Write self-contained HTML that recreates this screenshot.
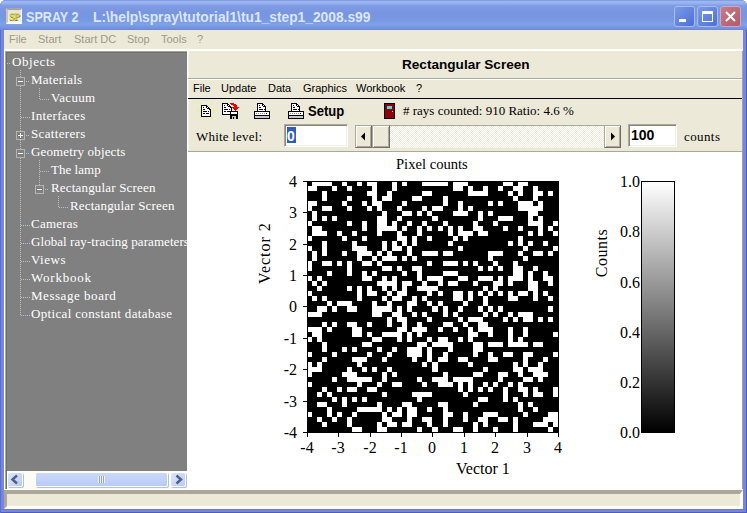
<!DOCTYPE html>
<html><head><meta charset="utf-8">
<style>
*{margin:0;padding:0;box-sizing:border-box}
html,body{width:747px;height:513px;overflow:hidden;background:#fff}
body{position:relative;font-family:"Liberation Sans",sans-serif;font-size:11px;color:#000}
.a{position:absolute}
.t{position:absolute;white-space:pre;line-height:1}
#win{left:0;top:0;width:747px;height:513px;background:#7686dc;border-radius:6px 6px 0 0;box-shadow:inset 1px 0 0 #5c6cd0,inset -1px -1px 0 #4e5cbc}
#title{left:0;top:0;width:747px;height:30px;border-radius:6px 6px 0 0;
 background:linear-gradient(#6b86d6 0px,#9cb6f2 1px,#9ab4f0 3px,#7e9ae2 6px,#7795e0 14px,#7898e2 20px,#7ea2e8 24px,#7898e2 27px,#6c86d6 30px)}
#client{left:4px;top:30px;width:739px;height:479px;background:#ece9d8}
.mt{color:#9c998a;font-size:11px}
#tree{left:5px;top:51px;width:182px;height:420px;background:#808080;border-left:1px solid #aca899;border-top:1px solid #aca899;box-shadow:inset 1px 1px 0 #716f64}
.tr{position:absolute;white-space:pre;font-family:"Liberation Serif",serif;font-size:13px;color:#fff;line-height:1;letter-spacing:0px}
.dv{position:absolute;width:1px;background:repeating-linear-gradient(#c0c0c0 0 1px,transparent 1px 2px)}
.dh{position:absolute;height:1px;background:repeating-linear-gradient(90deg,#c0c0c0 0 1px,transparent 1px 2px)}
.box{position:absolute;width:9px;height:9px;border:1px solid #b4b4b4;background:#808080}
.box:before{content:"";position:absolute;left:1px;top:3px;width:5px;height:1px;background:#fff}
.box.p:after{content:"";position:absolute;left:3px;top:1px;width:1px;height:5px;background:#fff}
.se{position:absolute;white-space:pre;font-family:"Liberation Serif",serif;line-height:1}
.mn{position:absolute;white-space:pre;font-size:11px;line-height:1;color:#000}
.btn{position:absolute;background:#ece9d8;border:1px solid;border-color:#aca899 #716f64 #716f64 #aca899;box-shadow:inset 1px 1px 0 #fff,inset -1px -1px 0 #aca899}
.tk{position:absolute;background:#000}
</style></head><body>
<div id="win" class="a"></div>
<div id="title" class="a"></div>
<!-- title corners -->


<!-- app icon -->
<div class="a" style="left:6px;top:8px;width:16px;height:16px;background:linear-gradient(#e8e0e0,#f4eeee);border-style:solid;border-width:2px 1px 2px 2px;border-color:#a8a4a0 #f8f8f8 #fff #c8c4c0"></div>
<div class="t" style="left:9px;top:12px;font-family:'Liberation Serif';font-weight:700;font-size:10px;color:#d8d830;letter-spacing:-0.5px;text-shadow:0.5px 0.5px 0 #707030">SP</div>
<div class="t" style="left:26px;top:10px;font-size:14px;font-weight:700;color:#dce6fa;transform:scaleX(0.9);transform-origin:0 0">SPRAY 2</div>
<div class="t" style="left:93px;top:10px;font-size:14px;font-weight:700;color:#dce6fa;transform:scaleX(0.985);transform-origin:0 0">L:\help\spray\tutorial1\tu1_step1_2008.s99</div>
<!-- title buttons -->
<div class="a" style="left:674px;top:6px;width:21px;height:21px;border:1px solid #a8bcf0;border-radius:3px;background:linear-gradient(135deg,#7a9ae8,#4d6fd8)"></div>
<div class="a" style="left:679px;top:19px;width:7px;height:3px;background:#fff"></div>
<div class="a" style="left:697px;top:6px;width:21px;height:21px;border:1px solid #a8bcf0;border-radius:3px;background:linear-gradient(135deg,#7a9ae8,#4d6fd8)"></div>
<div class="a" style="left:702px;top:11px;width:11px;height:11px;border:1px solid #fff;border-top-width:3px"></div>
<div class="a" style="left:720px;top:6px;width:21px;height:21px;border:1px solid #c8a8c8;border-radius:3px;background:linear-gradient(135deg,#c87c88,#b85868)"></div>
<svg class="a" style="left:720px;top:6px" width="21" height="21"><path d="M6 6L15 15M15 6L6 15" stroke="#fff" stroke-width="2"/></svg>

<div id="client" class="a"></div>
<!-- main menu -->
<div class="t mt" style="left:9px;top:34px">File</div>
<div class="t mt" style="left:38px;top:34px">Start</div>
<div class="t mt" style="left:74px;top:34px">Start DC</div>
<div class="t mt" style="left:127px;top:34px">Stop</div>
<div class="t mt" style="left:161px;top:34px">Tools</div>
<div class="t mt" style="left:197px;top:34px">?</div>
<div class="a" style="left:4px;top:49px;width:739px;height:2px;background:#fff"></div>

<!-- tree -->
<div id="tree" class="a">
</div>
<div class="a" style="left:0;top:0">
<div class="tr" style="left:12px;top:55px;letter-spacing:0.57px">Objects</div>
<div class="tr" style="left:31px;top:73px;letter-spacing:0.26px">Materials</div>
<div class="tr" style="left:51px;top:91px;letter-spacing:0.32px">Vacuum</div>
<div class="tr" style="left:31px;top:109px;letter-spacing:0.33px">Interfaces</div>
<div class="tr" style="left:31px;top:127px;letter-spacing:0.33px">Scatterers</div>
<div class="tr" style="left:31px;top:145px;letter-spacing:0.15px">Geometry objects</div>
<div class="tr" style="left:51px;top:163px;letter-spacing:0.03px">The lamp</div>
<div class="tr" style="left:51px;top:181px;letter-spacing:0.18px">Rectangular Screen</div>
<div class="tr" style="left:70px;top:199px;letter-spacing:0.18px">Rectangular Screen</div>
<div class="tr" style="left:31px;top:217px;letter-spacing:0.23px">Cameras</div>
<div class="tr" style="left:31px;top:235px;letter-spacing:0.07px">Global ray-tracing parameters</div>
<div class="tr" style="left:31px;top:253px;letter-spacing:0.5px">Views</div>
<div class="tr" style="left:31px;top:271px;letter-spacing:0.79px">Workbook</div>
<div class="tr" style="left:31px;top:289px;letter-spacing:0.54px">Message board</div>
<div class="tr" style="left:31px;top:307px;letter-spacing:0.34px">Optical constant database</div>
<div class="dh" style="left:7px;top:63px;width:4px"></div>
<div class="dv" style="left:20px;top:70px;height:246px"></div>
<div class="dh" style="left:26px;top:81px;width:4px"></div>
<div class="box" style="left:16px;top:77px"></div>
<div class="dh" style="left:40px;top:99px;width:9px"></div>
<div class="dh" style="left:21px;top:117px;width:9px"></div>
<div class="dh" style="left:26px;top:135px;width:4px"></div>
<div class="box p" style="left:16px;top:131px"></div>
<div class="dh" style="left:26px;top:153px;width:4px"></div>
<div class="box" style="left:16px;top:149px"></div>
<div class="dh" style="left:40px;top:171px;width:9px"></div>
<div class="dh" style="left:45px;top:189px;width:4px"></div>
<div class="box" style="left:35px;top:185px"></div>
<div class="dh" style="left:59px;top:207px;width:9px"></div>
<div class="dh" style="left:21px;top:225px;width:9px"></div>
<div class="dh" style="left:21px;top:243px;width:9px"></div>
<div class="dh" style="left:21px;top:261px;width:9px"></div>
<div class="dh" style="left:21px;top:279px;width:9px"></div>
<div class="dh" style="left:21px;top:297px;width:9px"></div>
<div class="dh" style="left:21px;top:315px;width:9px"></div>
<div class="dv" style="left:39px;top:88px;height:12px"></div>
<div class="dv" style="left:39px;top:160px;height:25px"></div>
<div class="dv" style="left:58px;top:196px;height:12px"></div>
</div>
<!-- tree scrollbar -->
<div class="a" style="left:5px;top:471px;width:182px;height:18px;background:#fcfcf6;border-left:1px solid #aca899;box-shadow:inset 1px 0 0 #716f64"></div>
<div class="a" style="left:7px;top:472px;width:16px;height:15px;border:1px solid #fff;border-radius:2px;background:linear-gradient(135deg,#dce6fd,#b9cbf5);box-shadow:1px 1px 0 #b4c0dc"></div>
<svg class="a" style="left:7px;top:472px" width="16" height="15"><path d="M10 3.5L5.5 7.5L10 11.5" fill="none" stroke="#4d6185" stroke-width="2.4"/></svg>
<div class="a" style="left:35px;top:472px;width:133px;height:15px;border:1px solid #fff;border-radius:2px;background:linear-gradient(#cad9fb,#b8cbf6);box-shadow:1px 1px 0 #b4c0dc"></div>
<div class="a" style="left:98px;top:476px;width:7px;height:7px;background:repeating-linear-gradient(90deg,#eef2fe 0 1px,#8ea4d8 1px 2px)"></div>
<div class="a" style="left:170px;top:472px;width:16px;height:15px;border:1px solid #fff;border-radius:2px;background:linear-gradient(135deg,#dce6fd,#b9cbf5);box-shadow:1px 1px 0 #b4c0dc"></div>
<svg class="a" style="left:170px;top:472px" width="16" height="15"><path d="M6.5 3.5L11 7.5L6.5 11.5" fill="none" stroke="#4d6185" stroke-width="2.4"/></svg>

<!-- right panel -->
<div class="a" style="left:187px;top:51px;width:1px;height:438px;background:#fff"></div>
<div class="a" style="left:188px;top:51px;width:1px;height:100px;background:#f6f4ec"></div>
<div class="a" style="left:742px;top:49px;width:1px;height:2px;background:#fff"></div><div class="a" style="left:742px;top:51px;width:1px;height:438px;background:#a0a2b8"></div>
<div class="t" style="left:402px;top:58px;font-size:13px;font-weight:700;transform:scaleX(1.045);transform-origin:0 0">Rectangular Screen</div>
<div class="a" style="left:188px;top:78px;width:554px;height:1px;background:#aca899"></div>
<div class="a" style="left:188px;top:79px;width:554px;height:1px;background:#fff"></div>
<div class="mn" style="left:193px;top:83px">File</div>
<div class="mn" style="left:221px;top:83px">Update</div>
<div class="mn" style="left:268px;top:83px">Data</div>
<div class="mn" style="left:303px;top:83px">Graphics</div>
<div class="mn" style="left:356px;top:83px">Workbook</div>
<div class="mn" style="left:416px;top:83px">?</div>
<div class="a" style="left:188px;top:98px;width:554px;height:1px;background:#000"></div>

<!-- toolbar icons -->
<svg class="a" style="left:0;top:0" width="747" height="130" shape-rendering="crispEdges"><rect x="199" y="102" width="2" height="1" fill="#eef0a0"/><rect x="211" y="102" width="2" height="1" fill="#eef0a0"/><rect x="199" y="103" width="1" height="1" fill="#eef0a0"/><rect x="200" y="103" width="1" height="1" fill="#e8f060"/><rect x="201" y="103" width="1" height="1" fill="#eef0a0"/><rect x="210" y="103" width="1" height="1" fill="#eef0a0"/><rect x="211" y="103" width="1" height="1" fill="#e8f060"/><rect x="212" y="103" width="1" height="1" fill="#eef0a0"/><rect x="200" y="104" width="2" height="1" fill="#eef0a0"/><rect x="210" y="104" width="2" height="1" fill="#eef0a0"/><rect x="197" y="109" width="2" height="1" fill="#eef0a0"/><rect x="213" y="109" width="2" height="1" fill="#eef0a0"/><rect x="197" y="110" width="1" height="1" fill="#e8f060"/><rect x="198" y="110" width="2" height="1" fill="#eef0a0"/><rect x="212" y="110" width="2" height="1" fill="#eef0a0"/><rect x="214" y="110" width="1" height="1" fill="#e8f060"/><rect x="197" y="111" width="2" height="1" fill="#eef0a0"/><rect x="213" y="111" width="2" height="1" fill="#eef0a0"/><rect x="199" y="116" width="2" height="1" fill="#eef0a0"/><rect x="211" y="116" width="2" height="1" fill="#eef0a0"/><rect x="199" y="117" width="1" height="1" fill="#eef0a0"/><rect x="200" y="117" width="1" height="1" fill="#e8f060"/><rect x="201" y="117" width="1" height="1" fill="#eef0a0"/><rect x="210" y="117" width="1" height="1" fill="#eef0a0"/><rect x="211" y="117" width="1" height="1" fill="#e8f060"/><rect x="212" y="117" width="1" height="1" fill="#eef0a0"/><rect x="200" y="118" width="2" height="1" fill="#eef0a0"/><rect x="210" y="118" width="2" height="1" fill="#eef0a0"/><rect x="201" y="105" width="6" height="1" fill="#000"/><rect x="201" y="106" width="1" height="1" fill="#000"/><rect x="202" y="106" width="4" height="1" fill="#fff"/><rect x="206" y="106" width="2" height="1" fill="#000"/><rect x="201" y="107" width="1" height="1" fill="#000"/><rect x="202" y="107" width="1" height="1" fill="#fff"/><rect x="203" y="107" width="1" height="1" fill="#000"/><rect x="204" y="107" width="2" height="1" fill="#fff"/><rect x="206" y="107" width="1" height="1" fill="#000"/><rect x="207" y="107" width="1" height="1" fill="#fff"/><rect x="208" y="107" width="1" height="1" fill="#000"/><rect x="201" y="108" width="1" height="1" fill="#000"/><rect x="202" y="108" width="5" height="1" fill="#fff"/><rect x="207" y="108" width="3" height="1" fill="#000"/><rect x="201" y="109" width="1" height="1" fill="#000"/><rect x="202" y="109" width="1" height="1" fill="#fff"/><rect x="203" y="109" width="2" height="1" fill="#000"/><rect x="205" y="109" width="4" height="1" fill="#fff"/><rect x="209" y="109" width="2" height="1" fill="#000"/><rect x="201" y="110" width="1" height="1" fill="#000"/><rect x="202" y="110" width="8" height="1" fill="#fff"/><rect x="210" y="110" width="1" height="1" fill="#000"/><rect x="201" y="111" width="1" height="1" fill="#000"/><rect x="202" y="111" width="1" height="1" fill="#fff"/><rect x="203" y="111" width="4" height="1" fill="#000"/><rect x="207" y="111" width="1" height="1" fill="#fff"/><rect x="208" y="111" width="1" height="1" fill="#000"/><rect x="209" y="111" width="1" height="1" fill="#fff"/><rect x="210" y="111" width="1" height="1" fill="#000"/><rect x="201" y="112" width="1" height="1" fill="#000"/><rect x="202" y="112" width="8" height="1" fill="#fff"/><rect x="210" y="112" width="1" height="1" fill="#000"/><rect x="201" y="113" width="1" height="1" fill="#000"/><rect x="202" y="113" width="1" height="1" fill="#fff"/><rect x="203" y="113" width="2" height="1" fill="#000"/><rect x="205" y="113" width="1" height="1" fill="#fff"/><rect x="206" y="113" width="3" height="1" fill="#000"/><rect x="209" y="113" width="1" height="1" fill="#fff"/><rect x="210" y="113" width="1" height="1" fill="#000"/><rect x="201" y="114" width="1" height="1" fill="#000"/><rect x="202" y="114" width="8" height="1" fill="#fff"/><rect x="210" y="114" width="1" height="1" fill="#000"/><rect x="201" y="115" width="1" height="1" fill="#000"/><rect x="202" y="115" width="8" height="1" fill="#fff"/><rect x="210" y="115" width="1" height="1" fill="#000"/><rect x="201" y="116" width="10" height="1" fill="#000"/><rect x="222" y="103" width="6" height="1" fill="#000"/><rect x="222" y="104" width="1" height="1" fill="#000"/><rect x="223" y="104" width="4" height="1" fill="#fff"/><rect x="227" y="104" width="2" height="1" fill="#000"/><rect x="222" y="105" width="1" height="1" fill="#000"/><rect x="223" y="105" width="1" height="1" fill="#fff"/><rect x="224" y="105" width="1" height="1" fill="#000"/><rect x="225" y="105" width="2" height="1" fill="#fff"/><rect x="227" y="105" width="1" height="1" fill="#000"/><rect x="228" y="105" width="1" height="1" fill="#fff"/><rect x="229" y="105" width="1" height="1" fill="#000"/><rect x="222" y="106" width="1" height="1" fill="#000"/><rect x="223" y="106" width="5" height="1" fill="#fff"/><rect x="228" y="106" width="3" height="1" fill="#000"/><rect x="222" y="107" width="1" height="1" fill="#000"/><rect x="223" y="107" width="1" height="1" fill="#fff"/><rect x="224" y="107" width="2" height="1" fill="#000"/><rect x="226" y="107" width="4" height="1" fill="#fff"/><rect x="230" y="107" width="2" height="1" fill="#000"/><rect x="222" y="108" width="1" height="1" fill="#000"/><rect x="223" y="108" width="8" height="1" fill="#fff"/><rect x="231" y="108" width="1" height="1" fill="#000"/><rect x="222" y="109" width="1" height="1" fill="#000"/><rect x="223" y="109" width="1" height="1" fill="#fff"/><rect x="224" y="109" width="4" height="1" fill="#000"/><rect x="228" y="109" width="1" height="1" fill="#fff"/><rect x="229" y="109" width="1" height="1" fill="#000"/><rect x="230" y="109" width="1" height="1" fill="#fff"/><rect x="231" y="109" width="1" height="1" fill="#000"/><rect x="222" y="110" width="1" height="1" fill="#000"/><rect x="223" y="110" width="8" height="1" fill="#fff"/><rect x="231" y="110" width="1" height="1" fill="#000"/><rect x="222" y="111" width="1" height="1" fill="#000"/><rect x="223" y="111" width="1" height="1" fill="#fff"/><rect x="224" y="111" width="2" height="1" fill="#000"/><rect x="226" y="111" width="1" height="1" fill="#fff"/><rect x="227" y="111" width="3" height="1" fill="#000"/><rect x="230" y="111" width="1" height="1" fill="#fff"/><rect x="231" y="111" width="1" height="1" fill="#000"/><rect x="222" y="112" width="1" height="1" fill="#000"/><rect x="223" y="112" width="8" height="1" fill="#fff"/><rect x="231" y="112" width="1" height="1" fill="#000"/><rect x="222" y="113" width="1" height="1" fill="#000"/><rect x="223" y="113" width="8" height="1" fill="#fff"/><rect x="231" y="113" width="1" height="1" fill="#000"/><rect x="222" y="114" width="10" height="1" fill="#000"/><rect x="230" y="103" width="4" height="1" fill="#e80000"/><rect x="231" y="104" width="5" height="1" fill="#e80000"/><rect x="233" y="105" width="4" height="1" fill="#e80000"/><rect x="234" y="106" width="3" height="1" fill="#e80000"/><rect x="232" y="107" width="7" height="1" fill="#e80000"/><rect x="233" y="108" width="5" height="1" fill="#e80000"/><rect x="234" y="109" width="3" height="1" fill="#e80000"/><rect x="235" y="110" width="1" height="1" fill="#e80000"/><rect x="230" y="111" width="8" height="1" fill="#000"/><rect x="230" y="112" width="1" height="1" fill="#000"/><rect x="231" y="112" width="6" height="1" fill="#fff"/><rect x="237" y="112" width="1" height="1" fill="#000"/><rect x="230" y="113" width="1" height="1" fill="#000"/><rect x="231" y="113" width="6" height="1" fill="#fff"/><rect x="237" y="113" width="1" height="1" fill="#000"/><rect x="230" y="114" width="8" height="1" fill="#000"/><rect x="230" y="115" width="8" height="1" fill="#000"/><rect x="230" y="116" width="2" height="1" fill="#000"/><rect x="232" y="116" width="4" height="1" fill="#c8c8c8"/><rect x="236" y="116" width="2" height="1" fill="#000"/><rect x="230" y="117" width="2" height="1" fill="#000"/><rect x="232" y="117" width="1" height="1" fill="#c8c8c8"/><rect x="233" y="117" width="1" height="1" fill="#000"/><rect x="234" y="117" width="2" height="1" fill="#c8c8c8"/><rect x="236" y="117" width="2" height="1" fill="#000"/><rect x="230" y="118" width="2" height="1" fill="#000"/><rect x="232" y="118" width="1" height="1" fill="#c8c8c8"/><rect x="233" y="118" width="1" height="1" fill="#000"/><rect x="234" y="118" width="2" height="1" fill="#c8c8c8"/><rect x="236" y="118" width="2" height="1" fill="#000"/><rect x="257" y="103" width="6" height="1" fill="#000"/><rect x="257" y="104" width="1" height="1" fill="#000"/><rect x="258" y="104" width="4" height="1" fill="#fff"/><rect x="262" y="104" width="2" height="1" fill="#000"/><rect x="257" y="105" width="1" height="1" fill="#000"/><rect x="258" y="105" width="1" height="1" fill="#fff"/><rect x="259" y="105" width="1" height="1" fill="#000"/><rect x="260" y="105" width="2" height="1" fill="#fff"/><rect x="262" y="105" width="1" height="1" fill="#000"/><rect x="263" y="105" width="1" height="1" fill="#fff"/><rect x="264" y="105" width="1" height="1" fill="#000"/><rect x="257" y="106" width="1" height="1" fill="#000"/><rect x="258" y="106" width="5" height="1" fill="#fff"/><rect x="263" y="106" width="3" height="1" fill="#000"/><rect x="257" y="107" width="1" height="1" fill="#000"/><rect x="258" y="107" width="1" height="1" fill="#fff"/><rect x="259" y="107" width="2" height="1" fill="#000"/><rect x="261" y="107" width="4" height="1" fill="#fff"/><rect x="265" y="107" width="1" height="1" fill="#000"/><rect x="257" y="108" width="1" height="1" fill="#000"/><rect x="258" y="108" width="7" height="1" fill="#fff"/><rect x="265" y="108" width="1" height="1" fill="#000"/><rect x="257" y="109" width="1" height="1" fill="#000"/><rect x="258" y="109" width="1" height="1" fill="#fff"/><rect x="259" y="109" width="4" height="1" fill="#000"/><rect x="263" y="109" width="1" height="1" fill="#fff"/><rect x="264" y="109" width="2" height="1" fill="#000"/><rect x="257" y="110" width="1" height="1" fill="#000"/><rect x="258" y="110" width="7" height="1" fill="#fff"/><rect x="265" y="110" width="1" height="1" fill="#000"/><rect x="254" y="111" width="16" height="1" fill="#000"/><rect x="254" y="112" width="1" height="1" fill="#000"/><rect x="255" y="112" width="14" height="1" fill="#fff"/><rect x="269" y="112" width="1" height="1" fill="#000"/><rect x="254" y="113" width="1" height="1" fill="#000"/><rect x="255" y="113" width="1" height="1" fill="#fff"/><rect x="256" y="113" width="1" height="1" fill="#909090"/><rect x="257" y="113" width="1" height="1" fill="#fff"/><rect x="258" y="113" width="1" height="1" fill="#909090"/><rect x="259" y="113" width="1" height="1" fill="#fff"/><rect x="260" y="113" width="1" height="1" fill="#909090"/><rect x="261" y="113" width="1" height="1" fill="#fff"/><rect x="262" y="113" width="1" height="1" fill="#909090"/><rect x="263" y="113" width="1" height="1" fill="#fff"/><rect x="264" y="113" width="1" height="1" fill="#909090"/><rect x="265" y="113" width="1" height="1" fill="#fff"/><rect x="266" y="113" width="1" height="1" fill="#000"/><rect x="267" y="113" width="2" height="1" fill="#fff"/><rect x="269" y="113" width="1" height="1" fill="#000"/><rect x="254" y="114" width="1" height="1" fill="#000"/><rect x="255" y="114" width="14" height="1" fill="#fff"/><rect x="269" y="114" width="1" height="1" fill="#000"/><rect x="254" y="115" width="16" height="1" fill="#000"/><rect x="254" y="116" width="1" height="1" fill="#000"/><rect x="255" y="116" width="14" height="1" fill="#c8c8c8"/><rect x="269" y="116" width="1" height="1" fill="#000"/><rect x="254" y="117" width="1" height="1" fill="#000"/><rect x="255" y="117" width="14" height="1" fill="#c8c8c8"/><rect x="269" y="117" width="1" height="1" fill="#000"/><rect x="254" y="118" width="16" height="1" fill="#000"/><rect x="291" y="103" width="6" height="1" fill="#000"/><rect x="291" y="104" width="1" height="1" fill="#000"/><rect x="292" y="104" width="4" height="1" fill="#fff"/><rect x="296" y="104" width="2" height="1" fill="#000"/><rect x="291" y="105" width="1" height="1" fill="#000"/><rect x="292" y="105" width="1" height="1" fill="#fff"/><rect x="293" y="105" width="1" height="1" fill="#000"/><rect x="294" y="105" width="2" height="1" fill="#fff"/><rect x="296" y="105" width="1" height="1" fill="#000"/><rect x="297" y="105" width="1" height="1" fill="#fff"/><rect x="298" y="105" width="1" height="1" fill="#000"/><rect x="291" y="106" width="1" height="1" fill="#000"/><rect x="292" y="106" width="5" height="1" fill="#fff"/><rect x="297" y="106" width="3" height="1" fill="#000"/><rect x="291" y="107" width="1" height="1" fill="#000"/><rect x="292" y="107" width="1" height="1" fill="#fff"/><rect x="293" y="107" width="2" height="1" fill="#000"/><rect x="295" y="107" width="4" height="1" fill="#fff"/><rect x="299" y="107" width="1" height="1" fill="#000"/><rect x="291" y="108" width="1" height="1" fill="#000"/><rect x="292" y="108" width="7" height="1" fill="#fff"/><rect x="299" y="108" width="1" height="1" fill="#000"/><rect x="291" y="109" width="1" height="1" fill="#000"/><rect x="292" y="109" width="1" height="1" fill="#fff"/><rect x="293" y="109" width="4" height="1" fill="#000"/><rect x="297" y="109" width="1" height="1" fill="#fff"/><rect x="298" y="109" width="2" height="1" fill="#000"/><rect x="291" y="110" width="1" height="1" fill="#000"/><rect x="292" y="110" width="7" height="1" fill="#fff"/><rect x="299" y="110" width="1" height="1" fill="#000"/><rect x="288" y="111" width="16" height="1" fill="#000"/><rect x="288" y="112" width="1" height="1" fill="#000"/><rect x="289" y="112" width="14" height="1" fill="#fff"/><rect x="303" y="112" width="1" height="1" fill="#000"/><rect x="288" y="113" width="1" height="1" fill="#000"/><rect x="289" y="113" width="1" height="1" fill="#fff"/><rect x="290" y="113" width="1" height="1" fill="#909090"/><rect x="291" y="113" width="1" height="1" fill="#fff"/><rect x="292" y="113" width="1" height="1" fill="#909090"/><rect x="293" y="113" width="1" height="1" fill="#fff"/><rect x="294" y="113" width="1" height="1" fill="#909090"/><rect x="295" y="113" width="1" height="1" fill="#fff"/><rect x="296" y="113" width="1" height="1" fill="#909090"/><rect x="297" y="113" width="1" height="1" fill="#fff"/><rect x="298" y="113" width="1" height="1" fill="#909090"/><rect x="299" y="113" width="1" height="1" fill="#fff"/><rect x="300" y="113" width="1" height="1" fill="#000"/><rect x="301" y="113" width="2" height="1" fill="#fff"/><rect x="303" y="113" width="1" height="1" fill="#000"/><rect x="288" y="114" width="1" height="1" fill="#000"/><rect x="289" y="114" width="14" height="1" fill="#fff"/><rect x="303" y="114" width="1" height="1" fill="#000"/><rect x="288" y="115" width="16" height="1" fill="#000"/><rect x="288" y="116" width="1" height="1" fill="#000"/><rect x="289" y="116" width="14" height="1" fill="#c8c8c8"/><rect x="303" y="116" width="1" height="1" fill="#000"/><rect x="288" y="117" width="1" height="1" fill="#000"/><rect x="289" y="117" width="14" height="1" fill="#c8c8c8"/><rect x="303" y="117" width="1" height="1" fill="#000"/><rect x="288" y="118" width="16" height="1" fill="#000"/></svg>
<div class="t" style="left:308px;top:104px;font-size:14px;font-weight:700;transform:scaleX(0.93);transform-origin:0 0">Setup</div>
<div class="a" style="left:384px;top:103px;width:11px;height:16px;background:#900000;border:1px solid #000"></div>
<div class="a" style="left:387px;top:106px;width:5px;height:3px;background:#40e0f0"></div>
<div class="a" style="left:392px;top:111px;width:1px;height:1px;background:#ffc080"></div>
<div class="se" style="left:403px;top:104px;font-size:13px">&#35; rays counted: 910 Ratio: 4.6 %</div>

<!-- white level row -->
<div class="se" style="left:196px;top:130px;font-size:13px;letter-spacing:0.2px">White level:</div>
<div class="a" style="left:284px;top:124px;width:64px;height:23px;background:#fff;border:1px solid;border-color:#aca899 #fff #fff #aca899;box-shadow:inset 1px 1px 0 #8a887c,inset -1px -1px 0 #f1efe2"></div>
<div class="a" style="left:287px;top:127px;width:9px;height:16px;background:#2f5eb4"></div>
<div class="t" style="left:287px;top:129px;font-size:14px;font-weight:700;color:#fff">0</div>
<div class="a" style="left:355px;top:125px;width:266px;height:23px;background:repeating-conic-gradient(#fff 0 25%,#ece9d8 0 50%) 0 0/2px 2px;border-top:1px solid #aca899"></div>
<div class="btn" style="left:355px;top:125px;width:17px;height:23px"></div>
<svg class="a" style="left:355px;top:125px" width="17" height="22"><path d="M6 11.5L10 7.5V15.5z" fill="#000"/></svg>
<div class="btn" style="left:372px;top:125px;width:18px;height:23px"></div>
<div class="btn" style="left:604px;top:125px;width:17px;height:23px"></div>
<svg class="a" style="left:604px;top:125px" width="17" height="22"><path d="M11 11.5L7 7.5V15.5z" fill="#000"/></svg>
<div class="a" style="left:628px;top:124px;width:49px;height:23px;background:#fff;border:1px solid;border-color:#aca899 #fff #fff #aca899;box-shadow:inset 1px 1px 0 #8a887c,inset -1px -1px 0 #f1efe2"></div>
<div class="t" style="left:631px;top:128px;font-size:14px;font-weight:700">100</div>
<div class="se" style="left:684px;top:130px;font-size:13px;letter-spacing:0.4px">counts</div>
<div class="a" style="left:188px;top:151px;width:554px;height:1px;background:#aca899"></div>

<!-- plot area -->
<div class="a" style="left:187px;top:152px;width:555px;height:337px;background:#fff"></div>
<div class="se" style="left:396px;top:157px;font-size:14.6px">Pixel counts</div>
<div class="a" style="left:307px;top:181px;width:252px;height:252px;background:#000"></div>
<svg class="a" style="left:307px;top:181px" width="251" height="251" shape-rendering="crispEdges"><path fill="#fff" d="M5 0H25V5H5zM35 0H40V5H35zM50 0H55V5H50zM60 0H70V5H60zM85 0H90V5H85zM95 0H100V5H95zM115 0H141V5H115zM146 0H161V5H146zM196 0H206V5H196zM211 0H221V5H211zM0 5H10V10H0zM25 5H30V10H25zM40 5H45V10H40zM65 5H70V10H65zM85 5H90V10H85zM146 5H156V10H146zM161 5H166V10H161zM176 5H181V10H176zM191 5H196V10H191zM206 5H216V10H206zM226 5H231V10H226zM15 10H20V15H15zM60 10H70V15H60zM80 10H85V15H80zM115 10H125V15H115zM161 10H181V15H161zM201 10H206V15H201zM211 10H216V15H211zM226 10H236V15H226zM241 10H246V15H241zM15 15H20V20H15zM40 15H45V20H40zM65 15H70V20H65zM75 15H85V20H75zM105 15H115V20H105zM136 15H141V20H136zM206 15H211V20H206zM226 15H231V20H226zM0 20H10V25H0zM35 20H40V25H35zM55 20H60V25H55zM65 20H75V25H65zM95 20H100V25H95zM136 20H141V25H136zM151 20H156V25H151zM181 20H186V25H181zM191 20H196V25H191zM211 20H226V25H211zM231 20H236V25H231zM0 25H5V30H0zM15 25H25V30H15zM40 25H45V30H40zM60 25H65V30H60zM70 25H75V30H70zM90 25H95V30H90zM115 25H120V30H115zM125 25H136V30H125zM151 25H156V30H151zM161 25H166V30H161zM211 25H236V30H211zM5 30H10V35H5zM75 30H80V35H75zM95 30H105V35H95zM110 30H115V35H110zM120 30H125V35H120zM146 30H161V35H146zM171 30H176V35H171zM181 30H186V35H181zM221 30H231V35H221zM5 35H10V40H5zM15 35H20V40H15zM25 35H30V40H25zM70 35H80V40H70zM90 35H95V40H90zM125 35H131V40H125zM171 35H176V40H171zM191 35H206V40H191zM221 35H226V40H221zM231 35H236V40H231zM0 40H5V45H0zM40 40H45V45H40zM55 40H60V45H55zM70 40H80V45H70zM85 40H90V45H85zM100 40H105V45H100zM115 40H120V45H115zM136 40H141V45H136zM166 40H171V45H166zM186 40H191V45H186zM221 40H236V45H221zM246 40H251V45H246zM5 45H15V50H5zM55 45H60V50H55zM70 45H90V50H70zM95 45H100V50H95zM110 45H115V50H110zM120 45H125V50H120zM131 45H136V50H131zM141 45H146V50H141zM151 45H156V50H151zM166 45H176V50H166zM196 45H201V50H196zM211 45H216V50H211zM231 45H236V50H231zM241 45H246V50H241zM5 50H20V55H5zM30 50H35V55H30zM45 50H50V55H45zM70 50H75V55H70zM90 50H95V55H90zM110 50H115V55H110zM141 50H146V55H141zM151 50H166V55H151zM171 50H181V55H171zM221 50H226V55H221zM231 50H236V55H231zM246 50H251V55H246zM0 55H5V60H0zM35 55H40V60H35zM55 55H60V60H55zM90 55H100V60H90zM105 55H110V60H105zM120 55H125V60H120zM146 55H151V60H146zM156 55H161V60H156zM211 55H216V60H211zM15 60H20V65H15zM45 60H50V65H45zM75 60H80V65H75zM85 60H90V65H85zM95 60H100V65H95zM105 60H110V65H105zM141 60H146V65H141zM201 60H206V65H201zM211 60H216V65H211zM221 60H226V65H221zM236 60H241V65H236zM0 65H5V70H0zM15 65H20V70H15zM45 65H60V70H45zM75 65H80V70H75zM85 65H95V70H85zM100 65H105V70H100zM151 65H156V70H151zM216 65H221V70H216zM246 65H251V70H246zM5 70H10V75H5zM15 70H20V75H15zM35 70H40V75H35zM50 70H65V75H50zM70 70H75V75H70zM80 70H85V75H80zM100 70H105V75H100zM115 70H131V75H115zM136 70H146V75H136zM181 70H196V75H181zM211 70H216V75H211zM226 70H236V75H226zM241 70H246V75H241zM5 75H10V80H5zM50 75H55V80H50zM65 75H70V80H65zM75 75H90V80H75zM95 75H100V80H95zM105 75H110V80H105zM181 75H186V80H181zM216 75H221V80H216zM0 80H5V85H0zM15 80H25V85H15zM30 80H35V85H30zM40 80H45V85H40zM55 80H65V85H55zM70 80H75V85H70zM120 80H125V85H120zM136 80H151V85H136zM156 80H161V85H156zM166 80H171V85H166zM186 80H191V85H186zM206 80H211V85H206zM0 85H5V90H0zM40 85H45V90H40zM75 85H85V90H75zM90 85H95V90H90zM105 85H115V90H105zM171 85H176V90H171zM181 85H186V90H181zM191 85H196V90H191zM206 85H216V90H206zM226 85H231V90H226zM20 90H25V95H20zM40 90H45V95H40zM55 90H60V95H55zM65 90H70V95H65zM95 90H100V95H95zM110 90H115V95H110zM136 90H151V95H136zM206 90H216V95H206zM221 90H226V95H221zM236 90H241V95H236zM0 95H5V100H0zM10 95H15V100H10zM55 95H65V100H55zM75 95H80V100H75zM85 95H90V100H85zM110 95H115V100H110zM120 95H136V100H120zM151 95H161V100H151zM171 95H186V100H171zM191 95H196V100H191zM201 95H216V100H201zM221 95H226V100H221zM236 95H246V100H236zM5 100H10V105H5zM15 100H20V105H15zM70 100H90V105H70zM95 100H105V105H95zM115 100H120V105H115zM131 100H136V105H131zM141 100H151V105H141zM166 100H171V105H166zM186 100H196V105H186zM201 100H206V105H201zM221 100H231V105H221zM241 100H246V105H241zM10 105H15V110H10zM40 105H45V110H40zM50 105H55V110H50zM60 105H65V110H60zM75 105H80V110H75zM85 105H90V110H85zM95 105H100V110H95zM110 105H131V110H110zM176 105H181V110H176zM186 105H191V110H186zM221 105H231V110H221zM0 110H5V115H0zM50 110H55V115H50zM60 110H70V115H60zM80 110H85V115H80zM90 110H100V115H90zM120 110H125V115H120zM131 110H136V115H131zM146 110H156V115H146zM161 110H166V115H161zM171 110H176V115H171zM181 110H186V115H181zM191 110H196V115H191zM201 110H206V115H201zM211 110H221V115H211zM226 110H231V115H226zM236 110H241V115H236zM5 115H10V120H5zM15 115H20V120H15zM50 115H55V120H50zM75 115H80V120H75zM85 115H95V120H85zM105 115H110V120H105zM115 115H120V120H115zM146 115H156V120H146zM161 115H166V120H161zM176 115H181V120H176zM201 115H211V120H201zM226 115H231V120H226zM241 115H246V120H241zM20 120H25V125H20zM30 120H45V125H30zM65 120H70V125H65zM80 120H85V125H80zM100 120H110V125H100zM120 120H125V125H120zM131 120H136V125H131zM156 120H161V125H156zM176 120H181V125H176zM10 125H20V131H10zM25 125H30V131H25zM40 125H50V131H40zM65 125H85V131H65zM90 125H95V131H90zM100 125H105V131H100zM125 125H131V131H125zM136 125H141V131H136zM151 125H156V131H151zM171 125H176V131H171zM181 125H186V131H181zM191 125H196V131H191zM241 125H246V131H241zM0 131H15V136H0zM65 131H75V136H65zM85 131H95V136H85zM105 131H110V136H105zM115 131H120V136H115zM136 131H141V136H136zM146 131H151V136H146zM176 131H181V136H176zM186 131H191V136H186zM201 131H206V136H201zM211 131H226V136H211zM80 136H85V141H80zM90 136H100V141H90zM120 136H125V141H120zM151 136H156V141H151zM161 136H176V141H161zM196 136H201V141H196zM206 136H211V141H206zM216 136H226V141H216zM231 136H236V141H231zM241 136H246V141H241zM15 141H20V146H15zM25 141H30V146H25zM40 141H50V146H40zM60 141H65V146H60zM80 141H85V146H80zM95 141H100V146H95zM110 141H115V146H110zM136 141H146V146H136zM156 141H161V146H156zM171 141H181V146H171zM0 146H15V151H0zM20 146H25V151H20zM45 146H55V151H45zM90 146H100V151H90zM105 146H120V151H105zM131 146H136V151H131zM146 146H151V151H146zM161 146H166V151H161zM171 146H186V151H171zM201 146H206V151H201zM216 146H221V151H216zM5 151H15V156H5zM45 151H55V156H45zM60 151H65V156H60zM75 151H95V156H75zM100 151H105V156H100zM110 151H115V156H110zM161 151H171V156H161zM181 151H186V156H181zM201 151H206V156H201zM216 151H221V156H216zM246 151H251V156H246zM0 156H5V161H0zM10 156H15V161H10zM65 156H75V161H65zM90 156H95V161H90zM100 156H105V161H100zM120 156H125V161H120zM131 156H141V161H131zM151 156H156V161H151zM161 156H166V161H161zM201 156H206V161H201zM211 156H216V161H211zM15 161H20V166H15zM55 161H65V166H55zM110 161H120V166H110zM125 161H146V166H125zM166 161H176V166H166zM181 161H196V166H181zM201 161H221V166H201zM226 161H236V166H226zM15 166H20V171H15zM35 166H40V171H35zM45 166H50V171H45zM70 166H75V171H70zM85 166H90V171H85zM100 166H115V171H100zM120 166H125V171H120zM141 166H146V171H141zM166 166H176V171H166zM0 171H5V176H0zM25 171H30V176H25zM60 171H65V176H60zM80 171H85V176H80zM100 171H115V176H100zM120 171H125V176H120zM136 171H141V176H136zM166 171H171V176H166zM181 171H186V176H181zM196 171H206V176H196zM216 171H226V176H216zM246 171H251V176H246zM15 176H20V181H15zM45 176H60V181H45zM75 176H80V181H75zM105 176H110V181H105zM120 176H125V181H120zM131 176H141V181H131zM151 176H161V181H151zM181 176H191V181H181zM216 176H221V181H216zM236 176H241V181H236zM0 181H5V186H0zM10 181H15V186H10zM50 181H55V186H50zM115 181H120V186H115zM125 181H131V186H125zM161 181H166V186H161zM206 181H211V186H206zM216 181H221V186H216zM231 181H236V186H231zM0 186H15V191H0zM40 186H45V191H40zM55 186H60V191H55zM65 186H70V191H65zM80 186H85V191H80zM125 186H131V191H125zM176 186H181V191H176zM206 186H216V191H206zM221 186H236V191H221zM0 191H5V196H0zM35 191H50V196H35zM75 191H80V196H75zM85 191H90V196H85zM136 191H141V196H136zM166 191H176V196H166zM191 191H201V196H191zM211 191H216V196H211zM226 191H241V196H226zM25 196H30V201H25zM40 196H65V201H40zM75 196H80V201H75zM110 196H115V201H110zM125 196H141V201H125zM146 196H166V201H146zM191 196H196V201H191zM216 196H226V201H216zM231 196H236V201H231zM0 201H5V206H0zM50 201H55V206H50zM70 201H75V206H70zM85 201H95V206H85zM115 201H120V206H115zM131 201H146V206H131zM151 201H156V206H151zM161 201H166V206H161zM176 201H181V206H176zM186 201H191V206H186zM201 201H206V206H201zM211 201H216V206H211zM15 206H20V211H15zM30 206H35V211H30zM40 206H50V211H40zM60 206H70V211H60zM151 206H156V211H151zM161 206H166V211H161zM171 206H176V211H171zM181 206H186V211H181zM196 206H201V211H196zM211 206H221V211H211zM226 206H231V211H226zM246 206H251V211H246zM10 211H15V216H10zM20 211H25V216H20zM75 211H80V216H75zM105 211H125V216H105zM156 211H161V216H156zM196 211H201V216H196zM216 211H221V216H216zM226 211H236V216H226zM246 211H251V216H246zM25 216H30V221H25zM35 216H40V221H35zM45 216H50V221H45zM55 216H60V221H55zM110 216H115V221H110zM171 216H181V221H171zM196 216H201V221H196zM206 216H211V221H206zM10 221H20V226H10zM35 221H40V226H35zM70 221H75V226H70zM95 221H105V226H95zM131 221H141V226H131zM166 221H171V226H166zM211 221H216V226H211zM221 221H226V226H221zM20 226H25V231H20zM50 226H75V231H50zM80 226H85V231H80zM90 226H95V231H90zM100 226H110V231H100zM120 226H125V231H120zM136 226H141V231H136zM211 226H216V231H211zM226 226H231V231H226zM0 231H5V236H0zM20 231H25V236H20zM30 231H35V236H30zM45 231H50V236H45zM75 231H80V236H75zM85 231H95V236H85zM100 231H110V236H100zM136 231H146V236H136zM156 231H161V236H156zM176 231H191V236H176zM216 231H221V236H216zM241 231H251V236H241zM10 236H15V241H10zM25 236H30V241H25zM40 236H45V241H40zM75 236H85V241H75zM100 236H105V241H100zM115 236H125V241H115zM136 236H141V241H136zM156 236H161V241H156zM171 236H181V241H171zM191 236H201V241H191zM206 236H211V241H206zM236 236H251V241H236zM15 241H20V246H15zM40 241H45V246H40zM70 241H75V246H70zM80 241H90V246H80zM95 241H105V246H95zM120 241H125V246H120zM136 241H141V246H136zM166 241H171V246H166zM176 241H181V246H176zM206 241H211V246H206zM226 241H241V246H226zM246 241H251V246H246zM45 246H55V251H45zM70 246H80V251H70zM110 246H115V251H110zM125 246H131V251H125zM146 246H156V251H146zM166 246H171V251H166zM186 246H191V251H186zM206 246H211V251H206zM241 246H246V251H241z"/></svg><div class="a" style="left:307px;top:181px;width:252px;height:1px;background:#000"></div><div class="a" style="left:307px;top:181px;width:1px;height:252px;background:#000"></div>
<!-- y ticks -->
<div class="tk" style="left:303px;top:181px;width:4px;height:1px"></div>
<div class="se" style="left:219px;width:78px;text-align:right;top:174px;font-size:16px">4</div>
<div class="tk" style="left:307px;top:433px;width:1px;height:4px"></div>
<div class="se" style="left:277px;width:60px;text-align:center;top:440px;font-size:16px">-4</div>
<div class="tk" style="left:303px;top:212px;width:4px;height:1px"></div>
<div class="se" style="left:219px;width:78px;text-align:right;top:205px;font-size:16px">3</div>
<div class="tk" style="left:338px;top:433px;width:1px;height:4px"></div>
<div class="se" style="left:308px;width:60px;text-align:center;top:440px;font-size:16px">-3</div>
<div class="tk" style="left:303px;top:244px;width:4px;height:1px"></div>
<div class="se" style="left:219px;width:78px;text-align:right;top:237px;font-size:16px">2</div>
<div class="tk" style="left:370px;top:433px;width:1px;height:4px"></div>
<div class="se" style="left:340px;width:60px;text-align:center;top:440px;font-size:16px">-2</div>
<div class="tk" style="left:303px;top:275px;width:4px;height:1px"></div>
<div class="se" style="left:219px;width:78px;text-align:right;top:268px;font-size:16px">1</div>
<div class="tk" style="left:401px;top:433px;width:1px;height:4px"></div>
<div class="se" style="left:371px;width:60px;text-align:center;top:440px;font-size:16px">-1</div>
<div class="tk" style="left:303px;top:306px;width:4px;height:1px"></div>
<div class="se" style="left:219px;width:78px;text-align:right;top:299px;font-size:16px">0</div>
<div class="tk" style="left:432px;top:433px;width:1px;height:4px"></div>
<div class="se" style="left:402px;width:60px;text-align:center;top:440px;font-size:16px">0</div>
<div class="tk" style="left:303px;top:338px;width:4px;height:1px"></div>
<div class="se" style="left:219px;width:78px;text-align:right;top:331px;font-size:16px">-1</div>
<div class="tk" style="left:464px;top:433px;width:1px;height:4px"></div>
<div class="se" style="left:434px;width:60px;text-align:center;top:440px;font-size:16px">1</div>
<div class="tk" style="left:303px;top:369px;width:4px;height:1px"></div>
<div class="se" style="left:219px;width:78px;text-align:right;top:362px;font-size:16px">-2</div>
<div class="tk" style="left:495px;top:433px;width:1px;height:4px"></div>
<div class="se" style="left:465px;width:60px;text-align:center;top:440px;font-size:16px">2</div>
<div class="tk" style="left:303px;top:401px;width:4px;height:1px"></div>
<div class="se" style="left:219px;width:78px;text-align:right;top:394px;font-size:16px">-3</div>
<div class="tk" style="left:527px;top:433px;width:1px;height:4px"></div>
<div class="se" style="left:497px;width:60px;text-align:center;top:440px;font-size:16px">3</div>
<div class="tk" style="left:303px;top:432px;width:4px;height:1px"></div>
<div class="se" style="left:219px;width:78px;text-align:right;top:425px;font-size:16px">-4</div>
<div class="tk" style="left:558px;top:433px;width:1px;height:4px"></div>
<div class="se" style="left:528px;width:60px;text-align:center;top:440px;font-size:16px">4</div>
<div class="se" style="left:580px;width:60px;text-align:right;top:174px;font-size:16px">1.0</div>
<div class="se" style="left:580px;width:60px;text-align:right;top:224px;font-size:16px">0.8</div>
<div class="se" style="left:580px;width:60px;text-align:right;top:275px;font-size:16px">0.6</div>
<div class="se" style="left:580px;width:60px;text-align:right;top:325px;font-size:16px">0.4</div>
<div class="se" style="left:580px;width:60px;text-align:right;top:375px;font-size:16px">0.2</div>
<div class="se" style="left:580px;width:60px;text-align:right;top:425px;font-size:16px">0.0</div>
<div class="se" style="left:234px;top:245px;font-size:16px;transform:rotate(-90deg);transform-origin:center;letter-spacing:1px">Vector 2</div>
<div class="se" style="left:456px;top:461px;font-size:16px">Vector 1</div>
<!-- colorbar -->
<div class="a" style="left:641px;top:181px;width:34px;height:252px;border:1px solid #000;background:linear-gradient(#fff,#000)"></div>
<div class="se" style="left:578px;top:245px;font-size:16px;transform:rotate(-90deg);transform-origin:center;letter-spacing:0.5px">Counts</div>

<!-- status bar -->
<div class="a" style="left:4px;top:489px;width:739px;height:1px;background:#fff"></div>
<div class="a" style="left:1px;top:509px;width:745px;height:1px;background:#6e7cc8"></div>
<div class="a" style="left:4px;top:490px;width:739px;height:19px;background:#ece9d8;border-style:solid;border-width:4px 3px 3px 3px;border-color:#aca899 #fff #fff #aca899"></div>
<div class="a" style="left:4px;top:49px;width:1px;height:440px;background:#fff"></div>
</body></html>
